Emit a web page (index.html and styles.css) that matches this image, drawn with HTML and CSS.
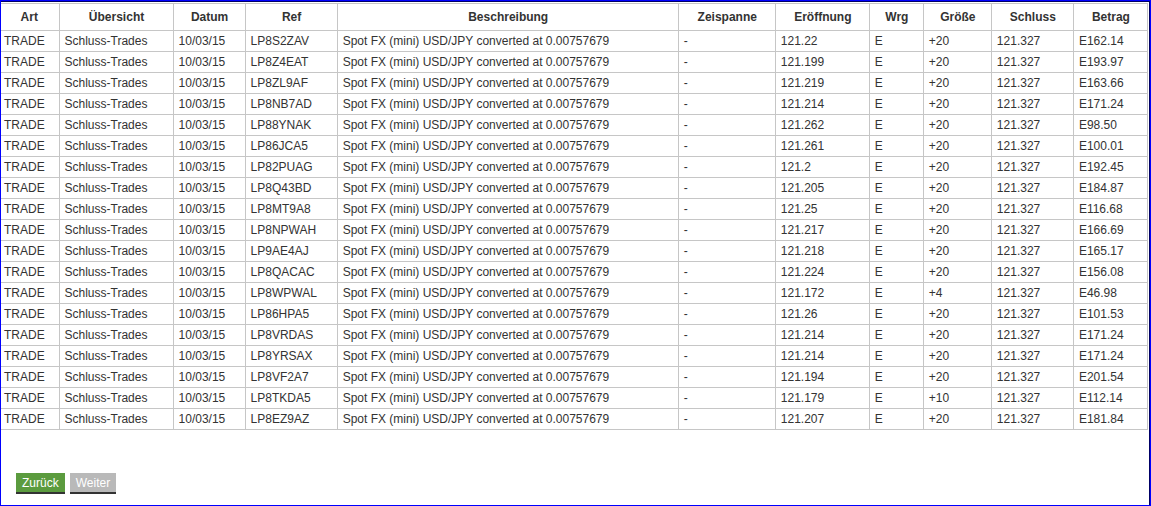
FILE: index.html
```html
<!DOCTYPE html>
<html lang="de">
<head>
    <meta charset="UTF-8">
    <title>Trades</title>
    <link rel="stylesheet" href="styles.css">
</head>
<body>
    <div class="frame">
        <table class="trades">
            <colgroup>
                <col style="width: 58px">
                <col style="width: 114px">
                <col style="width: 72px">
                <col style="width: 92px">
                <col style="width: 341px">
                <col style="width: 97px">
                <col style="width: 94px">
                <col style="width: 54px">
                <col style="width: 68px">
                <col style="width: 82px">
                <col style="width: 74px">
            </colgroup>
            <thead>
                <tr>
                    <th>Art</th>
                    <th>Übersicht</th>
                    <th>Datum</th>
                    <th>Ref</th>
                    <th>Beschreibung</th>
                    <th>Zeispanne</th>
                    <th>Eröffnung</th>
                    <th>Wrg</th>
                    <th>Größe</th>
                    <th>Schluss</th>
                    <th>Betrag</th>
                </tr>
            </thead>
            <tbody id="rows"></tbody>
        </table>
        <div class="pager">
            <button class="btn btn-back">Zurück</button>
            <button class="btn btn-next">Weiter</button>
        </div>
    </div>

    <script>
        const trades = [
            ['LP8S2ZAV', '121.22', '+20', 'E162.14'],
            ['LP8Z4EAT', '121.199', '+20', 'E193.97'],
            ['LP8ZL9AF', '121.219', '+20', 'E163.66'],
            ['LP8NB7AD', '121.214', '+20', 'E171.24'],
            ['LP88YNAK', '121.262', '+20', 'E98.50'],
            ['LP86JCA5', '121.261', '+20', 'E100.01'],
            ['LP82PUAG', '121.2', '+20', 'E192.45'],
            ['LP8Q43BD', '121.205', '+20', 'E184.87'],
            ['LP8MT9A8', '121.25', '+20', 'E116.68'],
            ['LP8NPWAH', '121.217', '+20', 'E166.69'],
            ['LP9AE4AJ', '121.218', '+20', 'E165.17'],
            ['LP8QACAC', '121.224', '+20', 'E156.08'],
            ['LP8WPWAL', '121.172', '+4', 'E46.98'],
            ['LP86HPA5', '121.26', '+20', 'E101.53'],
            ['LP8VRDAS', '121.214', '+20', 'E171.24'],
            ['LP8YRSAX', '121.214', '+20', 'E171.24'],
            ['LP8VF2A7', '121.194', '+20', 'E201.54'],
            ['LP8TKDA5', '121.179', '+10', 'E112.14'],
            ['LP8EZ9AZ', '121.207', '+20', 'E181.84']
        ];

        document.getElementById('rows').innerHTML = trades.map(t => `
            <tr>
                <td>TRADE</td>
                <td>Schluss-Trades</td>
                <td>10/03/15</td>
                <td>${t[0]}</td>
                <td>Spot FX (mini) USD/JPY converted at 0.00757679</td>
                <td>-</td>
                <td>${t[1]}</td>
                <td>E</td>
                <td>${t[2]}</td>
                <td>121.327</td>
                <td>${t[3]}</td>
            </tr>
        `).join('');
    </script>
</body>
</html>
```

FILE: styles.css
```css
html, body {
    margin: 0;
    padding: 0;
    background: #fff;
}
body {
    font-family: "Liberation Sans", Arial, sans-serif;
    font-size: 12px;
    color: #333;
}
.frame {
    width: 1151px;
    height: 506px;
    box-sizing: border-box;
    border: 1px solid #0000ff;
    box-shadow: inset 0 1px 0 #000066, inset -1px 0 0 #000066;
    padding-top: 2px;
}
.trades {
    border-collapse: collapse;
    table-layout: fixed;
    width: 1147px;
}
.trades th,
.trades td {
    border: 1px solid #c6c6c6;
    padding: 0 4px 0 5px;
    text-align: left;
    white-space: nowrap;
    overflow: hidden;
}
.trades th:first-child,
.trades td:first-child {
    border-left: none;
    padding-left: 3px;
}
.trades th {
    height: 26px;
    font-weight: bold;
    text-align: center;
}
.trades td {
    height: 20px;
}
.pager {
    margin: 43px 0 0 15px;
    display: flex;
    gap: 5px;
}
.btn {
    font-family: "Liberation Sans", Arial, sans-serif;
    font-size: 12px;
    color: #fff;
    border: none;
    border-bottom: 2px solid #333;
    padding: 3px 6px 2px;
    height: 21px;
    cursor: pointer;
}
.btn-back {
    background-color: #5b9b3e;
}
.btn-next {
    background-color: #b9b9b9;
}
```
